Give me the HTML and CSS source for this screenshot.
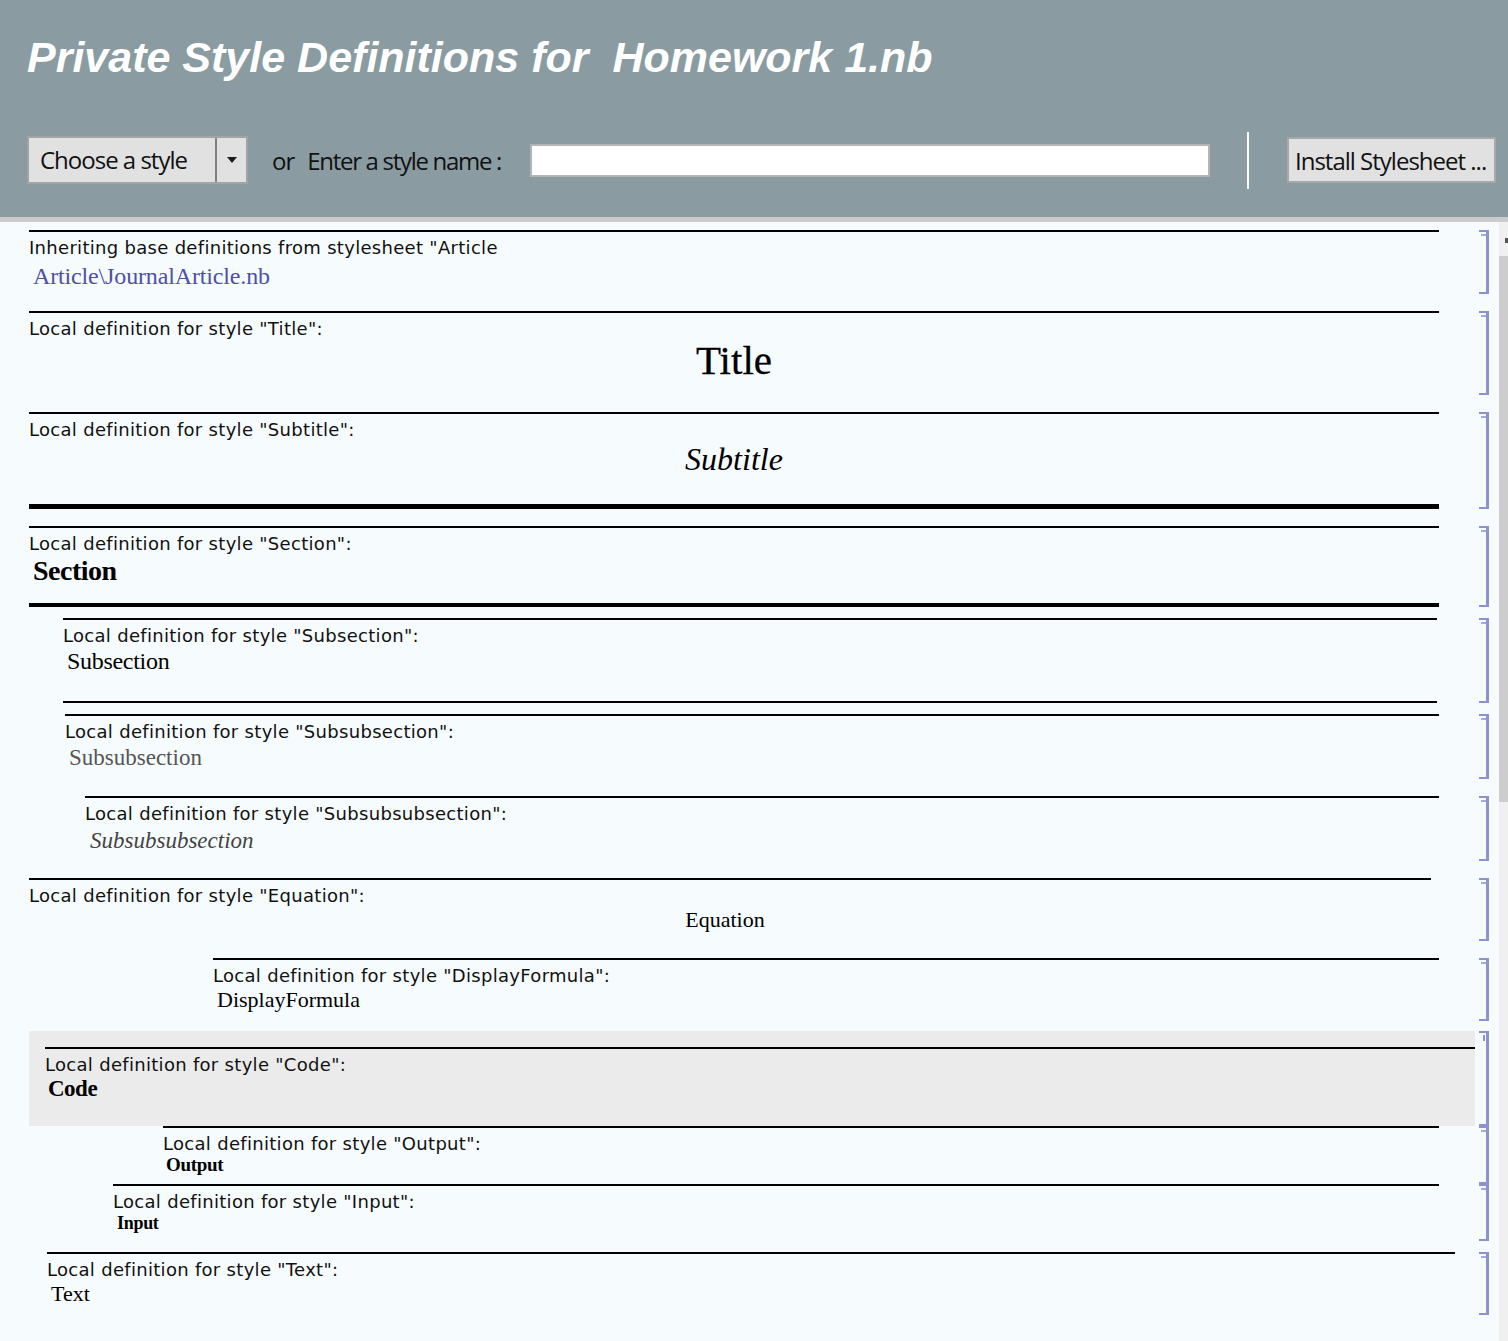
FILE: index.html
```html
<!DOCTYPE html>
<html lang="en">
<head>
<meta charset="utf-8">
<title>Private Style Definitions</title>
<link rel="stylesheet" href="styles.css">
</head>
<body>
<header class="header">
  <h1 class="doc-title">Private Style Definitions for  Homework 1.nb</h1>
  <div class="toolbar">
    <div class="select">
      <span class="select-label">Choose a style</span>
      <span class="select-divider"></span>
      <span class="select-arrow"><span class="tri"></span></span>
    </div>
    <div class="prompt"><span class="or">or</span><span class="enter">Enter a style name :</span></div>
    <div class="name-input"></div>
    <div class="sep"></div>
    <button class="install">Install Stylesheet ...</button>
  </div>
</header>
<div class="strip"></div>
<main class="main">
  <div class="notebook">
    <div class="cell cell-inherit">
      <div class="cell-body"><div class="frame">
        <div class="label">Inheriting base definitions from stylesheet "Article</div>
        <div class="sample s-link">Article\JournalArticle.nb</div>
      </div></div>
      <div class="bracket"></div>
    </div>
    <div class="cell cell-title">
      <div class="cell-body"><div class="frame">
        <div class="label">Local definition for style "Title":</div>
        <div class="sample s-title">Title</div>
      </div></div>
      <div class="bracket"></div>
    </div>
    <div class="cell cell-subtitle">
      <div class="cell-body"><div class="frame">
        <div class="label">Local definition for style "Subtitle":</div>
        <div class="sample s-subtitle">Subtitle</div>
      </div></div>
      <div class="bracket"></div>
    </div>
    <div class="cell cell-section">
      <div class="cell-body"><div class="frame">
        <div class="label">Local definition for style "Section":</div>
        <div class="sample s-section">Section</div>
      </div></div>
      <div class="bracket"></div>
    </div>
    <div class="cell cell-subsection">
      <div class="cell-body"><div class="frame">
        <div class="label">Local definition for style "Subsection":</div>
        <div class="sample s-subsection">Subsection</div>
      </div></div>
      <div class="bracket"></div>
    </div>
    <div class="cell cell-subsub">
      <div class="cell-body"><div class="frame">
        <div class="label">Local definition for style "Subsubsection":</div>
        <div class="sample s-subsub">Subsubsection</div>
      </div></div>
      <div class="bracket"></div>
    </div>
    <div class="cell cell-subsubsub">
      <div class="cell-body"><div class="frame">
        <div class="label">Local definition for style "Subsubsubsection":</div>
        <div class="sample s-subsubsub">Subsubsubsection</div>
      </div></div>
      <div class="bracket"></div>
    </div>
    <div class="cell cell-equation">
      <div class="cell-body"><div class="frame">
        <div class="label">Local definition for style "Equation":</div>
        <div class="sample s-equation">Equation</div>
      </div></div>
      <div class="bracket"></div>
    </div>
    <div class="cell cell-display">
      <div class="cell-body"><div class="frame">
        <div class="label">Local definition for style "DisplayFormula":</div>
        <div class="sample s-display">DisplayFormula</div>
      </div></div>
      <div class="bracket"></div>
    </div>
    <div class="cell cell-code">
      <div class="cell-body"><div class="frame">
        <div class="label">Local definition for style "Code":</div>
        <div class="sample s-code">Code</div>
      </div></div>
      <div class="bracket bracket-code"></div>
    </div>
    <div class="cell cell-output">
      <div class="cell-body"><div class="frame">
        <div class="label">Local definition for style "Output":</div>
        <div class="sample s-output">Output</div>
      </div></div>
      <div class="bracket"></div>
    </div>
    <div class="cell cell-input">
      <div class="cell-body"><div class="frame">
        <div class="label">Local definition for style "Input":</div>
        <div class="sample s-input">Input</div>
      </div></div>
      <div class="bracket"></div>
    </div>
    <div class="cell cell-text">
      <div class="cell-body"><div class="frame">
        <div class="label">Local definition for style "Text":</div>
        <div class="sample s-text">Text</div>
      </div></div>
      <div class="bracket"></div>
    </div>
  </div>
  <div class="scrollbar">
    <div class="sb-top"><span class="sb-arrow"></span></div>
    <div class="sb-thumb"></div>
  </div>
</main>
</body>
</html>
```

FILE: styles.css
```css
html, body {
  margin: 0;
  padding: 0;
}
body {
  background: #f6fbfd;
  font-family: "DejaVu Sans", sans-serif;
  color: #111;
}

/* ---------- header ---------- */
.header {
  background: #8a9ca2;
  height: 217px;
  box-sizing: border-box;
  padding-top: 32px;
}
.doc-title {
  margin: 0 0 0 27px;
  font: italic bold 43px/50px "Liberation Sans", Arial, sans-serif;
  color: #fff;
  white-space: pre;
}
.toolbar {
  display: flex;
  align-items: center;
  height: 48px;
  margin-top: 54px;
  padding-left: 27px;
  font-family: "Open Sans", sans-serif;
  font-size: 24px;
  letter-spacing: -1px;
  color: #111;
}
.select {
  display: flex;
  width: 221px;
  height: 48px;
  box-sizing: border-box;
  border: 2px solid #a3a3a3;
  background: #e1e1e1;
}
.select-label {
  width: 186px;
  box-sizing: border-box;
  padding-left: 11px;
  line-height: 44px;
  white-space: nowrap;
}
.select-divider {
  width: 2px;
  background: #808080;
}
.select-arrow {
  flex: 1;
  display: flex;
  align-items: center;
  justify-content: center;
}
.tri {
  width: 0;
  height: 0;
  border-left: 5px solid transparent;
  border-right: 5px solid transparent;
  border-top: 6px solid #1a1a1a;
}
.prompt {
  width: 282px;
  box-sizing: border-box;
  padding-left: 24px;
  white-space: nowrap;
  display: flex;
}
.enter {
  margin-left: 13px;
  letter-spacing: -1.3px;
}
.name-input {
  width: 680px;
  height: 33px;
  box-sizing: border-box;
  border: 2px solid #b4b4b4;
  background: #fff;
}
.sep {
  width: 2px;
  height: 57px;
  margin-left: 37px;
  background: #fff;
  flex: none;
}
.install {
  margin: 0 0 0 38px;
  width: 209px;
  height: 46px;
  box-sizing: border-box;
  border: 2px solid #a8a8a8;
  background: #e1e1e1;
  font: inherit;
  letter-spacing: inherit;
  color: #111;
  padding: 0 0 0 6px;
  text-align: left;
  white-space: nowrap;
}
.strip {
  height: 5px;
  background: #cccccc;
}

/* ---------- notebook ---------- */
.main {
  display: flex;
}
.notebook {
  width: 1499px;
  padding: 8px 0 26px;
  box-sizing: border-box;
}
.cell {
  display: flex;
  padding-left: 29px;
  padding-right: 10px;
}
.cell-body {
  flex: 1;
  display: flex;
  flex-direction: column;
}
.frame {
  flex: 1;
  border-top: 2px solid #000;
  margin-right: 36px;
}
.bracket {
  width: 10px;
  margin-left: 4px;
  box-sizing: border-box;
  border-style: solid;
  border-color: #8f90d0;
  border-width: 2px 3px 2px 0;
  position: relative;
}
.bracket::before {
  content: "";
  position: absolute;
  top: 2px;
  left: 2px;
  width: 5px;
  height: 2px;
  background: #a7a8dd;
}
.bracket-code::before {
  left: 4px;
  width: 2px;
  height: 6px;
  background: #8f90d0;
}

.label {
  font: 18px/20px "DejaVu Sans", sans-serif;
  letter-spacing: 0.3px;
  padding-top: 6px;
  color: #111;
  white-space: nowrap;
}
.sample {
  font-family: "Liberation Serif", "Times New Roman", serif;
  line-height: 1;
  margin-top: 3px;
  padding-left: 4px;
  white-space: nowrap;
  color: #000;
}

/* per-cell geometry */
.cell-inherit { height: 64px; }
.cell-title { height: 84px; margin-top: 17px; }
.cell-subtitle { height: 97px; margin-top: 17px; }
.cell-subtitle .frame { border-bottom: 5px solid #000; }
.cell-section { height: 81px; margin-top: 17px; }
.cell-section .frame { border-bottom: 4px solid #000; }
.cell-subsection { height: 85px; margin-top: 11px; }
.cell-subsection .frame { margin-left: 34px; margin-right: 38px; border-bottom: 2px solid #000; }
.cell-subsub { height: 65px; margin-top: 11px; }
.cell-subsub .frame { margin-left: 36px; }
.cell-subsubsub { height: 65px; margin-top: 17px; }
.cell-subsubsub .frame { margin-left: 56px; }
.cell-equation { height: 63px; margin-top: 17px; }
.cell-equation .frame { margin-right: 44px; }
.cell-display { height: 63px; margin-top: 17px; }
.cell-display .frame { margin-left: 184px; }
.cell-code { height: 95px; margin-top: 10px; }
.cell-code .cell-body { background: #ebebeb; padding-top: 16px; }
.cell-code .frame { margin-left: 16px; margin-right: 0; }
.cell-output { height: 58px; }
.cell-output .frame { margin-left: 134px; }
.cell-input { height: 57px; }
.cell-input .frame { margin-left: 84px; }
.cell-text { height: 63px; margin-top: 11px; }
.cell-text .frame { margin-left: 18px; margin-right: 20px; }

/* sample styles */
.s-link {
  font-size: 24px;
  letter-spacing: -0.15px;
  color: #4f4fa8;
  margin-top: 6px;
}
.s-title {
  font-size: 41px;
  text-align: center;
  padding-left: 0;
  margin-top: 1px;
  -webkit-text-stroke: 0.3px #000;
}
.s-subtitle {
  font-size: 32px;
  font-style: italic;
  text-align: center;
  padding-left: 0;
  margin-top: 3px;
}
.s-section {
  font-size: 28px;
  font-weight: bold;
  letter-spacing: -0.5px;
  margin-top: 3px;
}
.s-subsection {
  font-size: 24px;
  letter-spacing: -0.3px;
}
.s-subsub {
  font-size: 23px;
  color: #555;
  margin-top: 4px;
}
.s-subsubsub {
  font-size: 23px;
  font-style: italic;
  color: #444;
  padding-left: 5px;
  margin-top: 5px;
}
.s-equation {
  font-size: 22px;
  text-align: center;
  padding-left: 0;
  padding-right: 10px;
}
.s-display {
  font-size: 22px;
}
.s-code {
  font-size: 23px;
  font-weight: bold;
  letter-spacing: -0.5px;
  padding-left: 3px;
  margin-top: 2px;
}
.s-output {
  font-size: 19px;
  font-weight: bold;
  letter-spacing: -0.3px;
  padding-left: 3px;
  margin-top: 1px;
}
.s-input {
  font-size: 18px;
  font-weight: bold;
  letter-spacing: -0.3px;
  margin-top: 2px;
}
.s-text {
  font-size: 22px;
}

/* ---------- scrollbar ---------- */
.scrollbar {
  width: 9px;
  background: #f0f0f0;
  display: flex;
  flex-direction: column;
}
.sb-top {
  height: 34px;
  display: flex;
  align-items: flex-start;
}
.sb-arrow {
  width: 3px;
  height: 5px;
  margin: 16px 0 0 6px;
  background: #555;
}
.sb-thumb {
  height: 546px;
  background: #cdcdcd;
}
```
